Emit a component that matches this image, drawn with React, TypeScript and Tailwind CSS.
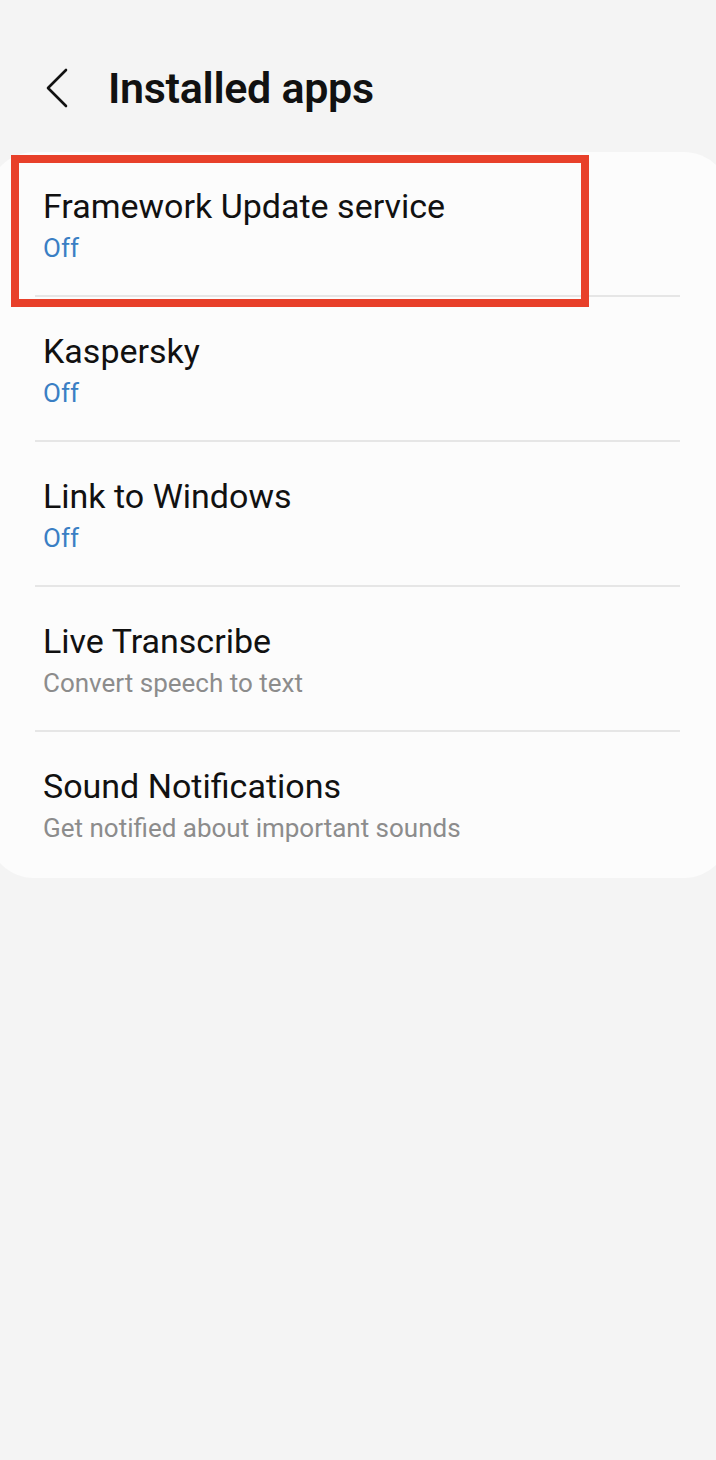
import React from "react";

type Item = { title: string; sub: string; on?: boolean };

const items: Item[] = [
  { title: "Framework Update service", sub: "Off", on: true },
  { title: "Kaspersky", sub: "Off", on: true },
  { title: "Link to Windows", sub: "Off", on: true },
  { title: "Live Transcribe", sub: "Convert speech to text" },
  { title: "Sound Notifications", sub: "Get notified about important sounds" },
];

function Row({ item, last }: { item: Item; last: boolean }) {
  return (
    <div className="pl-[47px] pr-[50px]">
      <div className={last ? "pt-[35px] pb-[35px] pl-[8px]" : "pt-[35px] pb-[32px] pl-[8px] border-b-2 border-[#e6e6e6]"}>
        <div className="text-[34px] leading-[38px] text-[#111111]">{item.title}</div>
        <div
          className={
            item.on
              ? "mt-[8px] text-[26px] leading-[30px] text-[#3a7fc4]"
              : "mt-[8px] text-[26px] leading-[30px] text-[#8c8c8c]"
          }
        >
          {item.sub}
        </div>
      </div>
    </div>
  );
}

export default function App() {
  return (
    <div
      className="relative w-[716px] h-[1460px] overflow-hidden bg-[#f4f4f4]"
      style={{ fontFamily: "Roboto, 'Noto Sans', sans-serif" }}
    >
      <header className="flex items-center h-[152px] pt-[24px]">
        <div className="w-[108px] h-[40px] pl-[44px]">
          <svg width="26" height="40" viewBox="0 0 26 40" fill="none">
            <path d="M22 2 L4 20 L22 38" stroke="#111" strokeWidth="2.6" strokeLinecap="round" strokeLinejoin="round" />
          </svg>
        </div>
        <h1 className="text-[43px] leading-[48px] font-semibold text-[#111111] tracking-[-0.3px]">Installed apps</h1>
      </header>

      <div className="-ml-[12px] w-[742px] bg-[#fcfcfc] rounded-[46px]">
        {items.map((it, i) => (
          <Row key={it.title} item={it} last={i === items.length - 1} />
        ))}
      </div>

      <div className="absolute left-[11px] top-[155px] w-[578px] h-[152px] border-[8px] border-[#e8402a]" />
    </div>
  );
}
